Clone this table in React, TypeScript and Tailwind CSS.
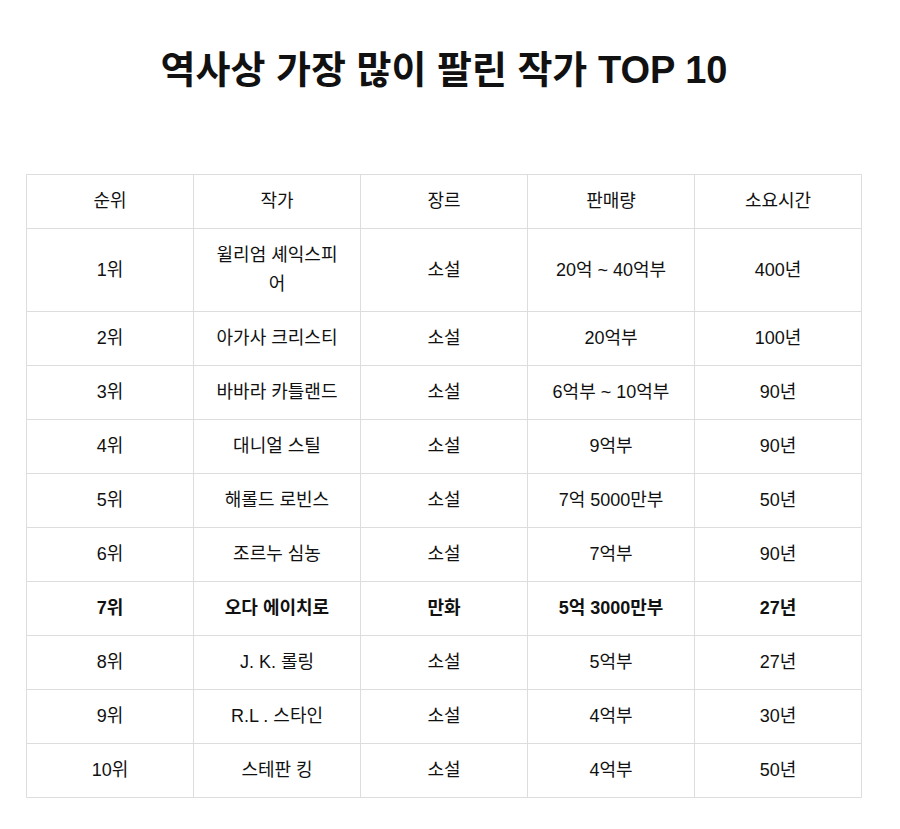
import React from "react";

const rows: [string, React.ReactNode, string, string, string, boolean?][] = [
  ["1위", <>윌리엄 셰익스피<br />어</>, "소설", "20억 ~ 40억부", "400년"],
  ["2위", "아가사 크리스티", "소설", "20억부", "100년"],
  ["3위", "바바라 카틀랜드", "소설", "6억부 ~ 10억부", "90년"],
  ["4위", "대니얼 스틸", "소설", "9억부", "90년"],
  ["5위", "해롤드 로빈스", "소설", "7억 5000만부", "50년"],
  ["6위", "조르누 심농", "소설", "7억부", "90년"],
  ["7위", "오다 에이치로", "만화", "5억 3000만부", "27년", true],
  ["8위", "J. K. 롤링", "소설", "5억부", "27년"],
  ["9위", "R.L . 스타인", "소설", "4억부", "30년"],
  ["10위", "스테판 킹", "소설", "4억부", "50년"],
];

const headers = ["순위", "작가", "장르", "판매량", "소요시간"];

export default function App() {
  return (
    <div
      className="w-[900px] h-[829px] bg-white text-[#111] overflow-hidden"
      style={{ fontFamily: '"Liberation Sans", "Noto Sans CJK KR", sans-serif' }}
    >
      <div className="w-[888px]">
        <h1 className="pt-[44px] text-center text-[38px] leading-[52px] font-bold">
          역사상 가장 많이 팔린 작가 TOP 10
        </h1>
        <table className="mt-[78px] ml-[26px] w-[836px] table-fixed border-collapse text-[18px] leading-[29px]">
          <thead>
            <tr>
              {headers.map((h) => (
                <th
                  key={h}
                  className="border border-[#dddddd] px-[13px] py-[12px] font-normal text-center"
                >
                  {h}
                </th>
              ))}
            </tr>
          </thead>
          <tbody>
            {rows.map((r) => (
              <tr key={r[0]} className={r[5] ? "font-bold" : ""}>
                {r.slice(0, 5).map((c, i) => (
                  <td
                    key={i}
                    className="border border-[#dddddd] px-[13px] py-[12px] text-center"
                  >
                    {c as React.ReactNode}
                  </td>
                ))}
              </tr>
            ))}
          </tbody>
        </table>
      </div>
    </div>
  );
}
